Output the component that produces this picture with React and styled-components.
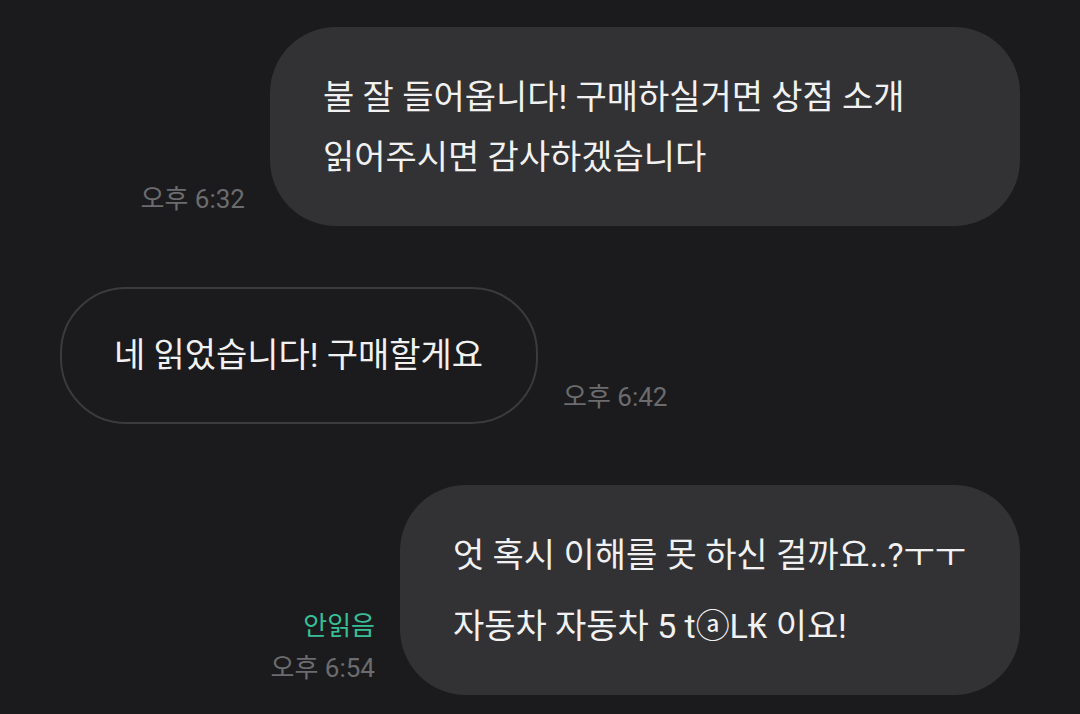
import React from 'react';
import styled, { createGlobalStyle } from 'styled-components';

const GlobalStyle = createGlobalStyle`
    html, body {
        margin: 0;
        padding: 0;
        background: #1b1b1d;
    }
    body {
        font-family: Roboto, "Noto Sans CJK KR", "Noto Sans", sans-serif;
        -webkit-font-smoothing: antialiased;
    }
`;

const Screen = styled.div`
    width: 1080px;
    height: 714px;
    box-sizing: border-box;
    padding: 27px 60px 0;
    display: flex;
    flex-direction: column;
    gap: 61px;
    overflow: hidden;
    background: #1b1b1d;
`;

const Row = styled.div`
    display: flex;
    flex-direction: ${(p) => (p.$mine ? 'row-reverse' : 'row')};
    align-items: flex-end;
    gap: 25px;
`;

const Bubble = styled.div`
    max-width: 750px;
    box-sizing: border-box;
    padding: ${(p) => (p.$mine ? '40px 54px 39px 53px' : '36px 53px 37px 52px')};
    border-radius: 66px;
    background: ${(p) => (p.$mine ? '#323235' : 'transparent')};
    border: ${(p) => (p.$mine ? 'none' : '2px solid #3b3b3e')};
    color: #f1f1f1;
    font-size: 34px;
    letter-spacing: -0.05px;
    line-height: 60px;
    word-break: keep-all;
`;

const Line = styled.div`
    line-height: 60px;
    margin-top: ${(p) => p.$gap || 0}px;
    white-space: nowrap;
`;

const Meta = styled.div`
    display: flex;
    flex-direction: column;
    align-items: ${(p) => (p.$mine ? 'flex-end' : 'flex-start')};
    gap: 14px;
    padding-bottom: 13px;
    flex-shrink: 0;
`;

const Time = styled.span`
    font-size: 26px;
    letter-spacing: 0;
    line-height: 28px;
    color: #6c6c6e;
`;

const Unread = styled.span`
    font-size: 26px;
    letter-spacing: 0;
    line-height: 28px;
    color: #38bf95;
`;

const Message = ({ mine, time, unread, children }) => (
    <Row $mine={mine}>
        <Bubble $mine={mine}>{children}</Bubble>
        <Meta $mine={mine}>
            {unread && <Unread>안읽음</Unread>}
            <Time>{time}</Time>
        </Meta>
    </Row>
);

const App = () => (
    <>
        <GlobalStyle />
        <Screen>
            <Message mine time="오후 6:32">
                불 잘 들어옵니다! 구매하실거면 상점 소개 읽어주시면 감사하겠습니다
            </Message>
            <Message time="오후 6:42">네 읽었습니다! 구매할게요</Message>
            <Message mine unread time="오후 6:54">
                <Line>엇 혹시 이해를 못 하신 걸까요..?ㅜㅜ</Line>
                <Line $gap={11}>자동차 자동차 5 tⓐL₭ 이요!</Line>
            </Message>
        </Screen>
    </>
);

export default App;
